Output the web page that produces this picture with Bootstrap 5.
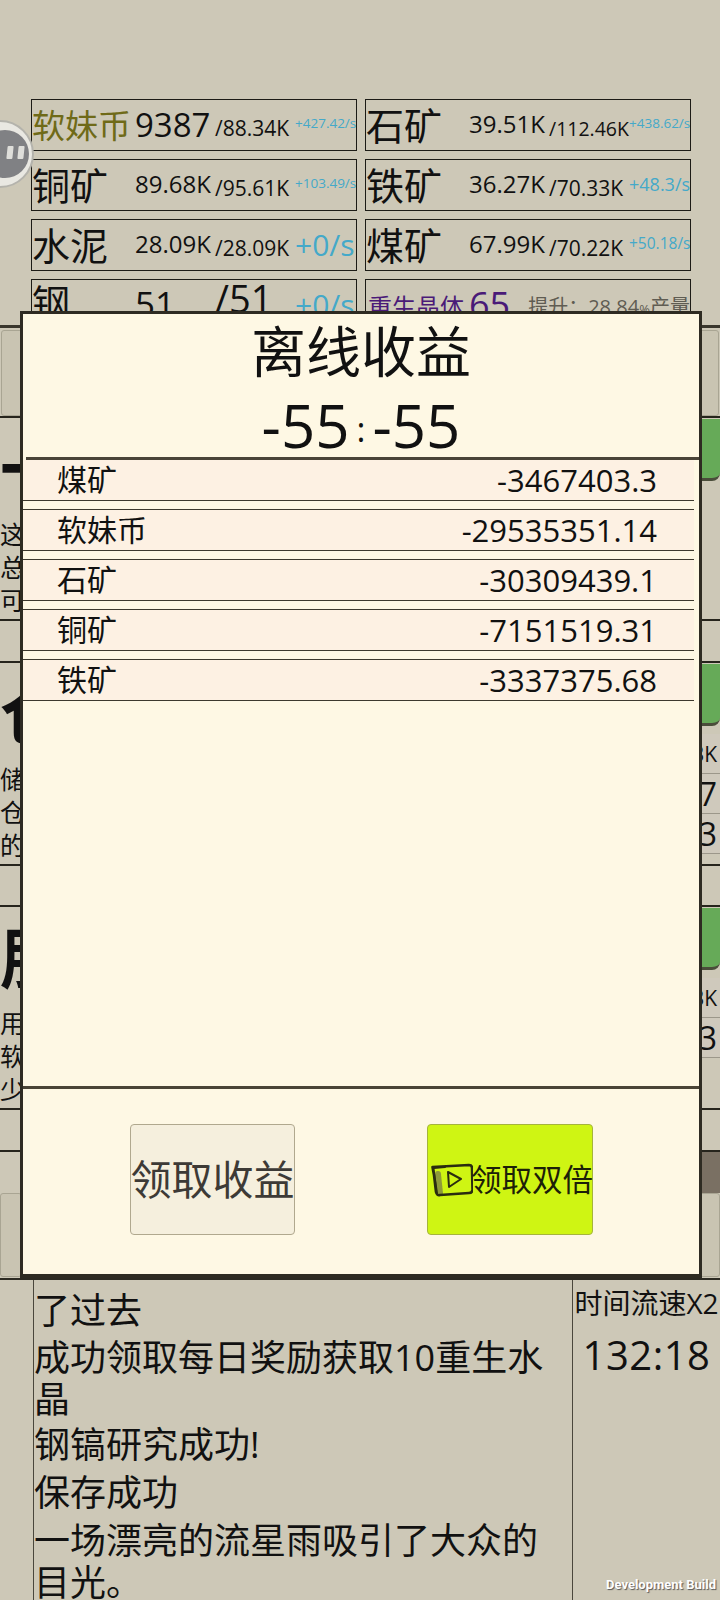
<!DOCTYPE html>
<html lang="zh-CN">
<head>
  <meta charset="UTF-8" />
  <meta name="viewport" content="width=device-width, initial-scale=1" />
  <title>离线收益</title>
  <link href="https://cdn.jsdelivr.net/npm/bootstrap@5.3.0/dist/css/bootstrap.min.css" rel="stylesheet" />
  <style>
    html, body { height: 1600px; overflow: hidden; }
    body { background: #cdc8b7; color: #111; font-family: "Open Sans", "Noto Sans CJK SC", sans-serif; position: relative; }

    .res-grid { display: grid; grid-template-columns: 326px 326px; gap: 8px 8px; padding: 99px 0 0 31px; height: 325px; overflow: hidden; }
    .res-cell { height: 52px; border: 1px solid #1c1b16; display: flex; align-items: center; white-space: nowrap; overflow: hidden; line-height: 1; }
    .res-name { width: 103px; font-size: 38px; flex: none; }
    .res-name.coin { font-size: 33px; color: #6f6a18; }
    .res-val { width: 80px; font-size: 24px; flex: none; margin-top: -3px; }
    .res-val.big { font-size: 33px; margin-top: -1px; }
    .res-max { width: 80px; font-size: 21px; flex: none; margin-top: 7px; }
    .res-max.long { font-size: 19.500px; }
    .res-rate { color: #44a9c9; flex: none; font-size: 18px; margin-top: -2px; }
    .res-rate.tiny { font-size: 13.500px; margin-top: -3px; }
    .res-rate.mid { font-size: 15.500px; margin-top: -2px; }
    .res-rate.wide { font-size: 30px; margin-top: 0; }
    .clip-row .res-name { margin-top: -6px; }
    .clip-row .res-val { font-size: 35px; margin-top: -3px; }
    .clip-row .res-max { font-size: 38px; margin-top: -14px; }
    .crystal { color: #4a1a78; font-size: 24px; padding-left: 2px; margin-top: 4px; }
    .crystal-num { color: #4a1a78; font-size: 36px; margin: 0 18px 0 5px; }
    .crystal-up { color: #5f5c52; font-size: 20px; margin-top: 4px; }
    .crystal-up small { font-size: 13px; }

    .pause-ring { position: absolute; left: -34px; top: 120px; width: 68px; height: 68px; border-radius: 50%; background: #e9e8e2; border: 2px solid #b4b3ac; display: flex; align-items: center; justify-content: flex-end; padding-right: 3px; }
    .pause-core { width: 48px; height: 48px; border-radius: 50%; background: #808184; display: flex; justify-content: flex-end; align-items: center; gap: 5px; padding-right: 5px; }
    .pause-core i { display: block; width: 6px; height: 13px; margin-top: -4px; background: #dededa; border-radius: 1px; transform: skewX(-6deg); }

    .game-panel { height: 953px; border-top: 3px solid #3a372d; overflow: hidden; }
    .tab-strip { height: 90px; border-bottom: 2px solid #26241c; padding: 2px 1px 0; display: flex; justify-content: space-between; }
    .tab-btn { width: 22px; border: 1px solid #a9a593; background: #c9c4b2; border-radius: 3px; }
    .up-card { height: 201px; display: flex; justify-content: space-between; }
    .up-left { width: 60px; overflow: hidden; }
    .up-title { height: 100px; font-size: 66px; font-weight: 700; line-height: 100px; }
    .up-desc { font-size: 25px; line-height: 33px; white-space: nowrap; }
    .up-right { width: 60px; display: flex; flex-direction: column; overflow: hidden; text-align: right; }
    .green-btn { height: 62px; background: #66aa58; border-bottom: 3px solid #4a4d3a; border-bottom-right-radius: 8px; margin: 1px 0 8px; flex: none; }
    .stat-row { height: 40px; border-bottom: 1px solid #9c978a; background: #cfc9bc; padding-right: 3px; font-size: 21px; line-height: 40px; }
    .stat-row.large { font-size: 32px; }
    .spacer-row { height: 43.500px; border-top: 2px solid #26241c; border-bottom: 2px solid #26241c; }
    .brown-band { height: 41px; background: #7a7063; margin-left: 640px; }
    .bottom-tabs { display: flex; justify-content: space-between; height: 84px; }

    .log-wrap { height: 322px; display: flex; border-top: 2px solid #2c2a22; }
    .log-gutter { width: 33px; flex: none; }
    .log-main { width: 540px; flex: none; border-left: 1px solid #4a473c; border-right: 1px solid #4a473c; font-size: 36px; line-height: 42px; padding: 10px 0 0 0; }
    .log-main p { margin: 0 0 6px; }
    .log-main p:nth-child(1) { margin-bottom: 5px; }
    .log-main p:nth-child(2) { margin-bottom: 3px; }
    .log-side { flex: 1; text-align: center; line-height: 1; }
    .speed-lbl { font-size: 28px; margin-top: 9px; white-space: nowrap; }
    .speed-time { font-size: 40px; margin-top: 18px; letter-spacing: .5px; }
    .dev-tag { position: absolute; right: 4px; bottom: 8px; color: #fff; font: 700 13px "Roboto", sans-serif; text-shadow: 1px 1px 1px #555; }

    .offline-box { position: absolute; left: 20px; top: 311px; width: 682px; height: 967px; background: #fef8e4; border: 3px solid #2e2b22; border-bottom-width: 4px; display: flex; flex-direction: column; }
    .offline-title { font-size: 55px; line-height: 1; text-align: center; padding-top: 9px; height: 73px; }
    .offline-time { height: 70px; font-size: 60px; line-height: 1; text-align: center; padding-top: 8px; }
    .offline-time b { font-weight: 400; font-size: 34px; vertical-align: 6px; margin: 0 7px; }
    .offline-list { flex: 1; border-top: 3px solid #4a4438; margin: 0 0 0 3px; padding: 0; list-style: none; }
    .offline-list li { height: 42px; width: 671px; margin-left: -3px; margin-bottom: 8px; background: #fdf1e3; border-top: 1px solid #3d392e; border-bottom: 1px solid #3d392e; display: flex; justify-content: space-between; align-items: center; padding: 0 37px 0 34px; font-size: 30px; line-height: 1; }
    .offline-list li:first-child { height: 41px; border-top: 0; }
    .offline-list li span + span { font-size: 31px; }
    .offline-foot { height: 188px; border-top: 3px solid #4a4436; display: flex; padding: 35px 0 0 107px; gap: 132px; }
    .claim-btn { width: 165px; height: 111px; padding: 0; border: 1px solid #b0a88e; border-radius: 4px; background: #f5efdd; color: #3d3a36; font-size: 41px; line-height: 1; white-space: nowrap; display: flex; align-items: center; justify-content: center; }
    .claim-btn.double { width: 166px; background: #cff513; border-color: #a5b43c; color: #1c2008; font-size: 30.500px; justify-content: flex-start; padding-left: 3px; }
    .claim-btn:hover { background: #cff513; }
    .claim-btn svg { flex: none; width: 42px; height: 34px; margin-right: -2px; }
  </style>
</head>
<body>

  <!-- resource counters -->
  <div class="res-grid">
    <div class="res-cell"><span class="res-name coin">软妹币</span><span class="res-val big">9387</span><span class="res-max">/88.34K</span><span class="res-rate tiny">+427.42/s</span></div>
    <div class="res-cell"><span class="res-name">石矿</span><span class="res-val">39.51K</span><span class="res-max long">/112.46K</span><span class="res-rate tiny">+438.62/s</span></div>
    <div class="res-cell"><span class="res-name">铜矿</span><span class="res-val">89.68K</span><span class="res-max">/95.61K</span><span class="res-rate tiny">+103.49/s</span></div>
    <div class="res-cell"><span class="res-name">铁矿</span><span class="res-val">36.27K</span><span class="res-max">/70.33K</span><span class="res-rate">+48.3/s</span></div>
    <div class="res-cell"><span class="res-name">水泥</span><span class="res-val">28.09K</span><span class="res-max">/28.09K</span><span class="res-rate wide">+0/s</span></div>
    <div class="res-cell"><span class="res-name">煤矿</span><span class="res-val">67.99K</span><span class="res-max">/70.22K</span><span class="res-rate mid">+50.18/s</span></div>
    <div class="res-cell clip-row"><span class="res-name">钢</span><span class="res-val">51</span><span class="res-max">/51</span><span class="res-rate wide">+0/s</span></div>
    <div class="res-cell"><span class="crystal">重生晶体</span><span class="crystal-num">65</span><span class="crystal-up">提升：28.84<small>%</small>产量</span></div>
  </div>

  <div class="pause-ring"><div class="pause-core"><i></i><i></i></div></div>

  <!-- upgrade list behind the dialog -->
  <div class="game-panel">
    <div class="tab-strip"><div class="tab-btn"></div><div class="tab-btn"></div></div>

    <div class="up-card">
      <div class="up-left"><div class="up-title">一</div><div class="up-desc">这<br>总<br>可</div></div>
      <div class="up-right"><div class="green-btn"></div></div>
    </div>
    <div class="spacer-row"></div>

    <div class="up-card">
      <div class="up-left"><div class="up-title">仓</div><div class="up-desc">储<br>仓<br>的</div></div>
      <div class="up-right"><div class="green-btn"></div><div class="stat-row">3K</div><div class="stat-row large">7</div><div class="stat-row large">3</div></div>
    </div>
    <div class="spacer-row"></div>

    <div class="up-card">
      <div class="up-left"><div class="up-title">朋</div><div class="up-desc">用<br>软<br>少</div></div>
      <div class="up-right"><div class="green-btn"></div><div class="stat-row">3K</div><div class="stat-row large">3</div></div>
    </div>
    <div class="spacer-row"></div>

    <div class="brown-band"></div>
    <div class="bottom-tabs"><div class="tab-btn"></div><div class="tab-btn"></div></div>
  </div>

  <!-- message log -->
  <div class="log-wrap">
    <div class="log-gutter"></div>
    <div class="log-main">
      <p>了过去</p>
      <p>成功领取每日奖励获取10重生水晶</p>
      <p>钢镐研究成功!</p>
      <p>保存成功</p>
      <p>一场漂亮的流星雨吸引了大众的目光。</p>
    </div>
    <div class="log-side">
      <div class="speed-lbl">时间流速X2</div>
      <div class="speed-time">132:18</div>
    </div>
  </div>
  <div class="dev-tag">Development Build</div>

  <!-- offline earnings dialog -->
  <div class="offline-box">
    <div class="offline-title">离线收益</div>
    <div class="offline-time">-55<b>:</b>-55</div>
    <ul class="offline-list">
      <li><span>煤矿</span><span>-3467403.3</span></li>
      <li><span>软妹币</span><span>-29535351.14</span></li>
      <li><span>石矿</span><span>-30309439.1</span></li>
      <li><span>铜矿</span><span>-7151519.31</span></li>
      <li><span>铁矿</span><span>-3337375.68</span></li>
    </ul>
    <div class="offline-foot">
      <button type="button" class="btn claim-btn">领取收益</button>
      <button type="button" class="btn claim-btn double">
        <svg viewBox="0 0 42 34" fill="none" stroke="#2a2c10" stroke-width="2.600" stroke-linecap="round" stroke-linejoin="round">
          <path d="M7 11 L9 30" stroke="#8e9a3a" stroke-width="6" stroke-dasharray="1.500 1.500" />
          <path d="M1.500 4 L38 2 Q41 2 41 5 L41.500 27 Q41 30 38 30 L9 32 Q6 33 5 29 L3 12 Q2 7 1.500 4 Z" />
          <path d="M3 5 L14 4 M2.500 6 L6 30" stroke-width="1.800" />
          <path d="M17 9 L30 16 L18 24 Z" stroke-width="2" />
        </svg>
        <span>领取双倍</span>
      </button>
    </div>
  </div>

  <script src="https://cdn.jsdelivr.net/npm/bootstrap@5.3.0/dist/js/bootstrap.bundle.min.js"></script>
</body>
</html>
